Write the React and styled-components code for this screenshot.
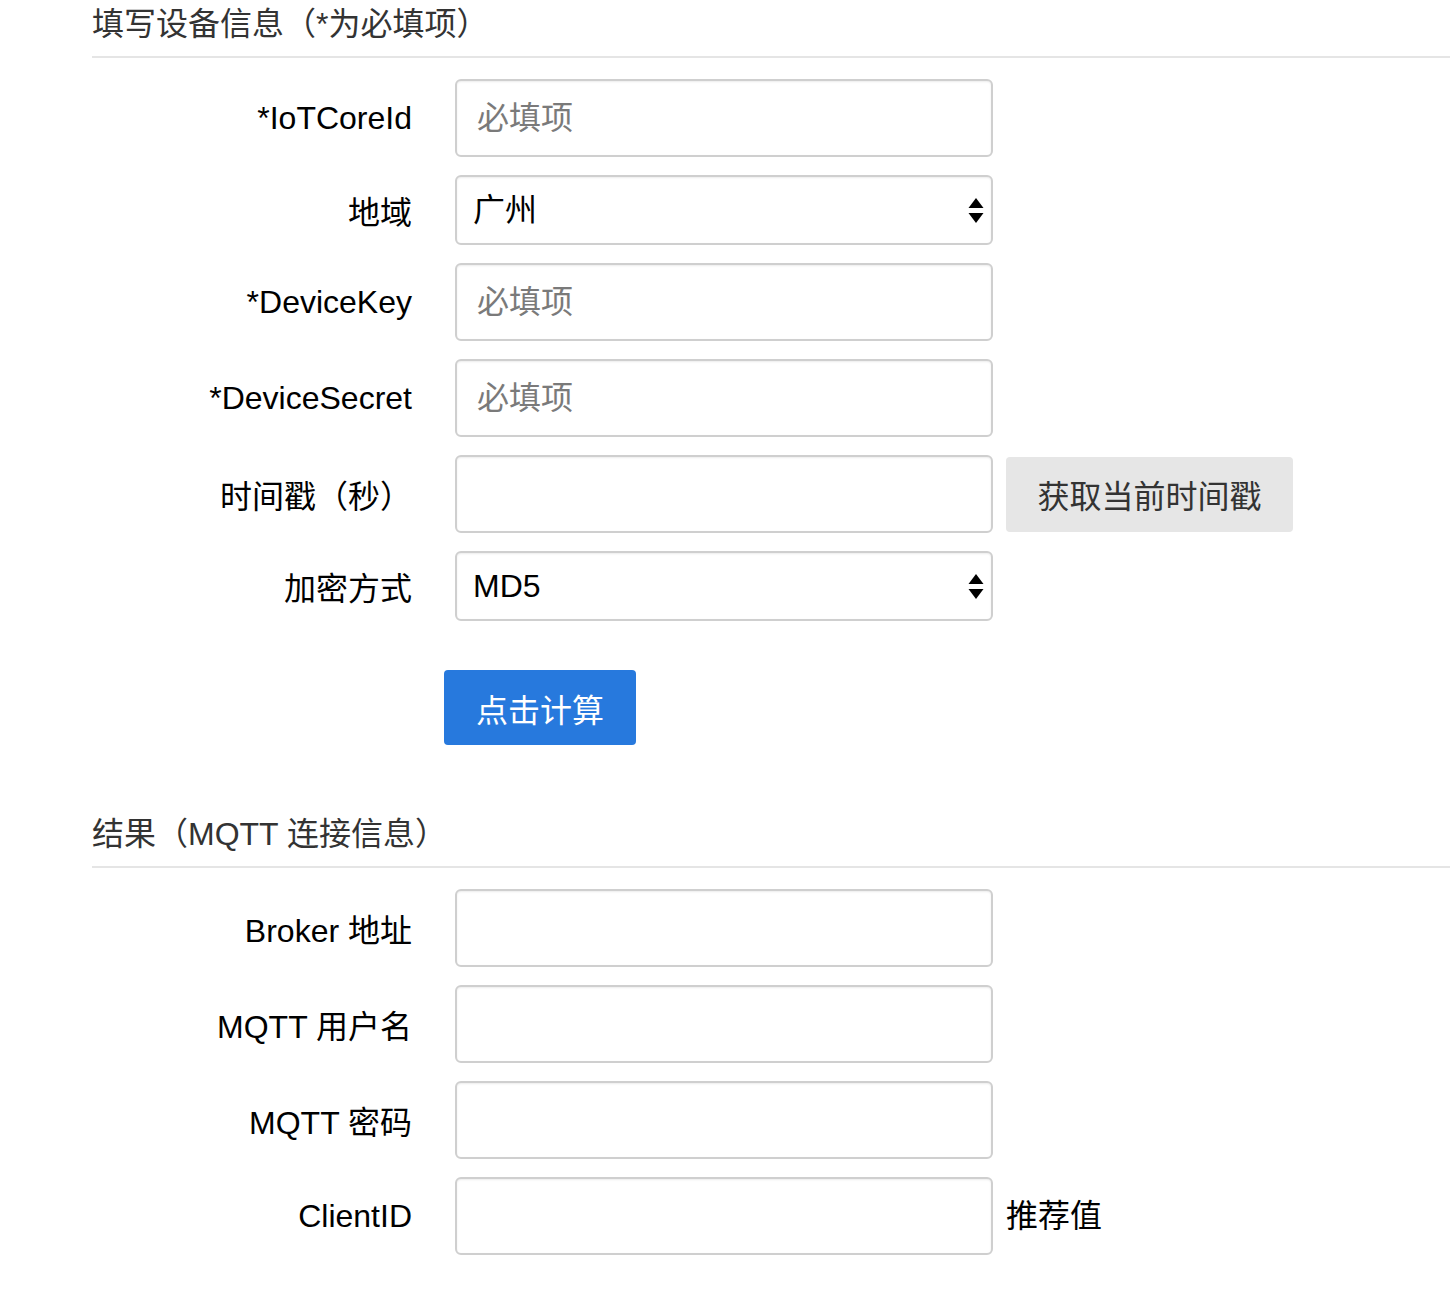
import React from "react";
import styled, { createGlobalStyle } from "styled-components";

const Global = createGlobalStyle`
  html, body { margin: 0; padding: 0; background: #fff; }
  body { font-family: "Liberation Sans", "Noto Sans CJK SC", sans-serif; }
  * { box-sizing: border-box; }
`;

const Page = styled.div`
  padding: 0 0 60px 92px;
  font-family: "Liberation Sans", "Noto Sans CJK SC", sans-serif;
`;

const SectionTitle = styled.div`
  font-size: 32px;
  line-height: 48px;
  color: #333;
  padding-bottom: 8px;
  border-bottom: 2px solid #e5e5e5;
  margin-top: ${(p) => p.$top || 0}px;
  margin-bottom: 21px;
`;

const Row = styled.div`
  display: flex;
  align-items: center;
  margin-bottom: 18px;
`;

const Label = styled.label`
  width: 320px;
  margin-right: 43px;
  text-align: right;
  font-size: 32px;
  color: #000;
  flex-shrink: 0;
`;

const Input = styled.input`
  width: 538px;
  height: 78px;
  border: 2px solid #cfcfcf;
  border-radius: 6px;
  box-shadow: inset 0 1px 2px rgba(0, 0, 0, 0.08);
  padding: 0 20px;
  font-size: 32px;
  font-family: inherit;
  color: #000;
  outline: none;
  &::placeholder { color: #7a7a7a; }
`;

const SelectWrap = styled.div`
  position: relative;
  width: 538px;
  height: 70px;
`;

const Select = styled.select`
  appearance: none;
  -webkit-appearance: none;
  width: 100%;
  height: 100%;
  border: 2px solid #cfcfcf;
  border-radius: 6px;
  background: #fff;
  box-shadow: inset 0 1px 2px rgba(0, 0, 0, 0.08);
  padding: 0 40px 0 16px;
  font-size: 32px;
  font-family: inherit;
  color: #000;
  outline: none;
`;

const Arrows = styled.svg`
  position: absolute;
  right: 9px;
  top: 50%;
  transform: translateY(-50%);
  pointer-events: none;
`;

const GrayButton = styled.button`
  margin-left: 13px;
  width: 287px;
  height: 75px;
  border: none;
  border-radius: 4px;
  background: #e6e6e6;
  color: #333;
  font-size: 32px;
  font-family: inherit;
  padding: 0;
`;

const ActionRow = styled.div`
  margin: 49px 0 0 352px;
`;

const PrimaryButton = styled.button`
  width: 192px;
  height: 75px;
  border: none;
  border-radius: 4px;
  background: #2779dd;
  color: #fff;
  font-size: 32px;
  font-family: inherit;
  padding: 0;
`;

const Hint = styled.span`
  margin-left: 13px;
  font-size: 32px;
  color: #000;
  margin-top: -6px;
`;

function SelectBox({ value, options }) {
  return (
    <SelectWrap>
      <Select defaultValue={value}>
        {options.map((o) => (
          <option key={o}>{o}</option>
        ))}
      </Select>
      <Arrows width="16" height="28" viewBox="0 0 16 28">
        <polygon points="8,2 15.5,12 0.5,12" fill="#000" />
        <polygon points="0.5,17 15.5,17 8,27" fill="#000" />
      </Arrows>
    </SelectWrap>
  );
}

export default function App() {
  return (
    <Page>
      <Global />
      <SectionTitle>填写设备信息（*为必填项）</SectionTitle>
      <Row>
        <Label>*IoTCoreId</Label>
        <Input placeholder="必填项" />
      </Row>
      <Row>
        <Label>地域</Label>
        <SelectBox value="广州" options={["广州", "北京", "上海"]} />
      </Row>
      <Row>
        <Label>*DeviceKey</Label>
        <Input placeholder="必填项" />
      </Row>
      <Row>
        <Label>*DeviceSecret</Label>
        <Input placeholder="必填项" />
      </Row>
      <Row>
        <Label>时间戳（秒）</Label>
        <Input />
        <GrayButton>获取当前时间戳</GrayButton>
      </Row>
      <Row>
        <Label>加密方式</Label>
        <SelectBox value="MD5" options={["MD5", "SHA256"]} />
      </Row>
      <ActionRow>
        <PrimaryButton>点击计算</PrimaryButton>
      </ActionRow>

      <SectionTitle $top={65}>结果（MQTT 连接信息）</SectionTitle>
      <Row>
        <Label>Broker 地址</Label>
        <Input />
      </Row>
      <Row>
        <Label>MQTT 用户名</Label>
        <Input />
      </Row>
      <Row>
        <Label>MQTT 密码</Label>
        <Input />
      </Row>
      <Row>
        <Label>ClientID</Label>
        <Input />
        <Hint>推荐值</Hint>
      </Row>
    </Page>
  );
}
